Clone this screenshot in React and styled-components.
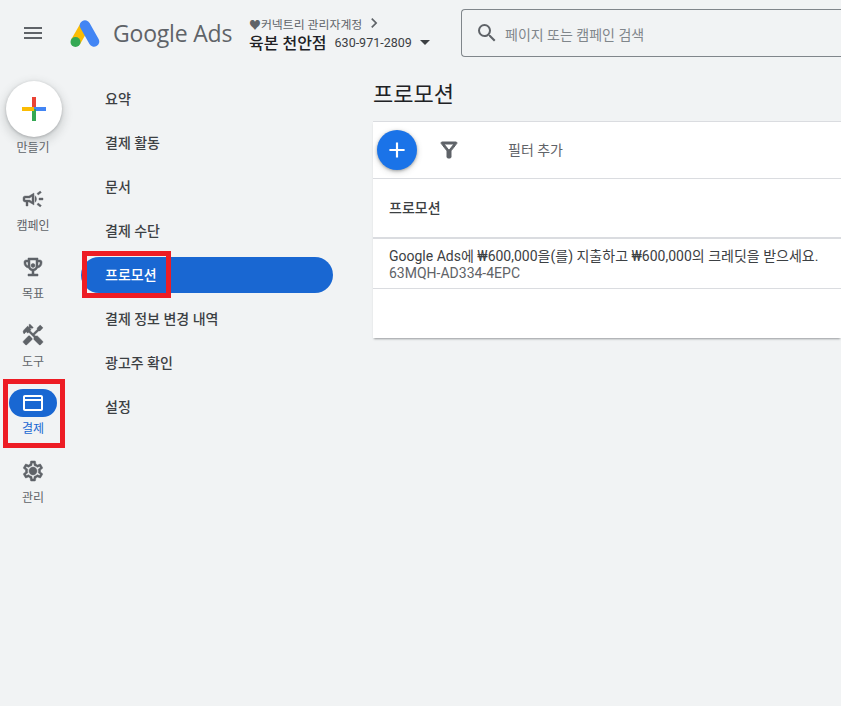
import React from "react";
import styled, { createGlobalStyle } from "styled-components";

const FONT = `Roboto, "Noto Sans CJK KR", sans-serif`;

const GlobalStyle = createGlobalStyle`
  html, body {
    margin: 0;
    height: 100%;
    overflow: hidden;
    background: #f1f3f4;
    font-family: ${FONT};
  }
`;

const Page = styled.div`
  position: relative;
  width: 841px;
  height: 706px;
  overflow: hidden;
  background: #f1f3f4;
`;

const TopBar = styled.header`
  display: flex;
  align-items: center;
  height: 66px;
  padding-left: 21px;
`;

const MenuButton = styled.div`
  display: flex;
  width: 24px;
  margin-right: 25px;
  color: #5f6368;
`;

const Brand = styled.div`
  display: flex;
  align-items: center;
  width: 179px;
  flex: none;
  color: #5f6368;
  font-family: "Open Sans", ${FONT};
  font-size: 23px;
  letter-spacing: -0.2px;
  gap: 13px;
`;

const AccountBlock = styled.div`
  display: flex;
  flex-direction: column;
  width: 212px;
  flex: none;
`;

const Manager = styled.div`
  display: flex;
  align-items: center;
  height: 18px;
  gap: 2px;
  font-size: 11.9px;
  color: #5f6368;
`;

const AccountRow = styled.div`
  display: flex;
  align-items: center;
  height: 20px;
`;

const AccountName = styled.span`
  font-size: 16px;
  font-weight: 500;
  color: #202124;
  margin-right: 8px;
`;

const AccountId = styled.span`
  font-size: 12.5px;
  color: #3c4043;
  margin-right: 8px;
`;

const Caret = styled.span`
  width: 0;
  height: 0;
  border-left: 5px solid transparent;
  border-right: 5px solid transparent;
  border-top: 5px solid #3c4043;
`;

const SearchBox = styled.div`
  display: flex;
  align-items: center;
  flex: none;
  width: 400px;
  height: 48px;
  box-sizing: border-box;
  border: 1px solid #80868b;
  border-right: none;
  border-radius: 4px 0 0 4px;
  padding-left: 13px;
  gap: 6px;
  color: #5f6368;
  font-size: 14px;
`;

const SearchText = styled.span`
  color: #80868b;
  padding-top: 2px;
`;

const Body = styled.div`
  display: flex;
  align-items: flex-start;
`;

const Rail = styled.nav`
  display: flex;
  flex-direction: column;
  align-items: center;
  flex: none;
  width: 66px;
  padding-top: 15px;
`;

const CreateCircle = styled.div`
  display: flex;
  align-items: center;
  justify-content: center;
  width: 56px;
  height: 56px;
  margin-left: 2px;
  border-radius: 50%;
  background: #fff;
  box-shadow: 0 1px 3px rgba(60, 64, 67, 0.3), 0 4px 8px 3px rgba(60, 64, 67, 0.15);
`;

const CreateLabel = styled.div`
  font-size: 12px;
  line-height: 16px;
  margin-top: 3px;
  margin-bottom: 29px;
  color: #5f6368;
`;

const RailItem = styled.div`
  display: flex;
  flex-direction: column;
  align-items: center;
  height: 68px;
  color: ${(p) => (p.$active ? "#1967d2" : "#5f6368")};
  font-size: 12px;
  line-height: 16px;
`;

const RailIcon = styled.div`
  display: flex;
  align-items: center;
  justify-content: center;
  width: 48px;
  height: 28px;
  margin-bottom: ${(p) => (p.$active ? "4px" : "5px")};
  border-radius: 14px;
  background: ${(p) => (p.$active ? "#1967d2" : "transparent")};
  color: ${(p) => (p.$active ? "#fff" : "#5f6368")};
`;

const SubNav = styled.nav`
  display: flex;
  flex-direction: column;
  flex: none;
  width: 252px;
  margin-left: 15px;
  margin-right: 40px;
  margin-top: 15px;
`;

const SubItem = styled.div`
  display: flex;
  align-items: center;
  height: 36px;
  box-sizing: border-box;
  margin-bottom: 8px;
  padding: 0 0 2px 24px;
  border-radius: 18px;
  font-size: 14px;
  font-weight: 500;
  color: ${(p) => (p.$active ? "#fff" : "#3c4043")};
  background: ${(p) => (p.$active ? "#1967d2" : "transparent")};
`;

const Content = styled.main`
  flex: 1;
  min-width: 0;
`;

const Title = styled.h1`
  margin: 0;
  height: 55px;
  padding-top: 1px;
  box-sizing: border-box;
  font-size: 22px;
  font-weight: 400;
  line-height: 55px;
  color: #202124;
`;

const Card = styled.section`
  background: #fff;
  height: 216px;
  border-top: 1px solid #dadce0;
  box-shadow: 0 2px 2px -1px rgba(60, 64, 67, 0.5);
`;

const Toolbar = styled.div`
  display: flex;
  align-items: center;
  height: 56px;
  padding-left: 4px;
  border-bottom: 1px solid #dadce0;
`;

const AddButton = styled.div`
  display: flex;
  align-items: center;
  justify-content: center;
  width: 40px;
  height: 40px;
  border-radius: 50%;
  background: #1a73e8;
  color: #fff;
  box-shadow: 0 1px 3px rgba(60, 64, 67, 0.4), 0 2px 6px rgba(60, 64, 67, 0.2);
`;

const FilterIcon = styled.div`
  display: flex;
  margin-left: 20px;
  margin-right: 47px;
  color: #5f6368;
`;

const FilterText = styled.span`
  font-size: 14px;
  color: #5f6368;
  margin-bottom: 2px;
`;

const HeadRow = styled.div`
  display: flex;
  align-items: center;
  height: 60px;
  padding: 0 0 2px 16px;
  box-sizing: border-box;
  border-bottom: 2px solid #dadce0;
  font-size: 14px;
  font-weight: 500;
  color: #3c4043;
`;

const PromoRow = styled.div`
  height: 50px;
  padding: 9px 0 0 16px;
  box-sizing: border-box;
  border-bottom: 1px solid #dadce0;
  font-size: 14px;
  line-height: 17px;
  color: #3c4043;
  white-space: nowrap;
`;

const PromoCode = styled.div`
  color: #5f6368;
`;

const Highlight = styled.div`
  position: absolute;
  box-sizing: border-box;
  left: ${(p) => p.$x}px;
  top: ${(p) => p.$y}px;
  width: ${(p) => p.$w}px;
  height: ${(p) => p.$h}px;
  border: 5px solid #ed1c24;
  pointer-events: none;
`;

const Icon = ({ d, size = 24, bold = 0, flip }) => (
  <svg width={size} height={size} viewBox="0 0 24 24" fill="currentColor" stroke="currentColor" strokeWidth={bold}>
    <path d={d} transform={flip ? "matrix(-1 0 0 1 24 0)" : undefined} />
  </svg>
);

const ICONS = {
  menu: "M3 18h18v-2H3v2zm0-5h18v-2H3v2zm0-7v2h18V6H3z",
  search:
    "M15.5 14h-.79l-.28-.27A6.47 6.47 0 0 0 16 9.5 6.5 6.5 0 1 0 9.5 16c1.61 0 3.09-.59 4.23-1.57l.27.28v.79l5 4.99L20.49 19l-4.99-5zm-6 0C7.01 14 5 11.99 5 9.5S7.01 5 9.5 5 14 7.01 14 9.5 11.99 14 9.5 14z",
  chevron: "M8.6 16.6 13.2 12 8.6 7.4 10 6l6 6-6 6z",
  campaign:
    "M18 11v2h4v-2h-4zm-2 6.61c.96.71 2.21 1.65 3.2 2.4.4-.53.8-1.07 1.2-1.6-.99-.75-2.24-1.69-3.2-2.41-.4.54-.8 1.08-1.2 1.61zM20.4 5.6c-.4-.53-.8-1.07-1.2-1.6-.99.75-2.24 1.69-3.2 2.4.4.53.8 1.07 1.2 1.6.96-.72 2.21-1.65 3.2-2.4zM4 9c-1.1 0-2 .9-2 2v2c0 1.1.9 2 2 2h1v4h2v-4h1l5 3V6L8 9H4zm5.03 1.71L11 9.53v4.94l-1.97-1.18-.48-.29H4v-2h4.55l.48-.29zM15.5 12c0-1.33-.58-2.53-1.5-3.35v6.69c.92-.81 1.5-2.01 1.5-3.34z",
  trophy:
    "M19 5h-2V3H7v2H5c-1.1 0-2 .9-2 2v1c0 2.55 1.92 4.63 4.39 4.94A5.01 5.01 0 0 0 11 15.9V19H7v2h10v-2h-4v-3.1a5.01 5.01 0 0 0 3.61-2.96C19.08 12.63 21 10.55 21 8V7c0-1.1-.9-2-2-2zM5 8V7h2v3.82C5.84 10.4 5 9.3 5 8zm7 6c-1.65 0-3-1.35-3-3V5h6v6c0 1.65-1.35 3-3 3zm7-6c0 1.3-.84 2.4-2 2.82V7h2v1z M12 8.5a2 2 0 1 0 0 4 2 2 0 0 0 0-4z",
  tools:
    "m21.67 18.17-5.3-5.3h-.99l-2.54 2.54v.99l5.3 5.3c.39.39 1.02.39 1.41 0l2.12-2.12c.39-.38.39-1.02 0-1.41zM17.34 10.19l1.41-1.41 2.12 2.12a3 3 0 0 0 0-4.24l-3.54-3.54-1.41 1.41V1.71l-.7-.71-3.54 3.54.71.71h2.83l-1.41 1.41 1.06 1.06-2.89 2.89-4.13-4.13V5.06L4.83 2.04 2 4.87 5.03 7.9h1.41l4.13 4.13-.85.85H7.61l-5.3 5.3c-.39.39-.39 1.02 0 1.41l2.12 2.12c.39.39 1.02.39 1.41 0l5.3-5.3v-2.12l5.15-5.15 1.05 1.05z",
  card: "M20 4H4c-1.11 0-2 .89-2 2v12c0 1.11.89 2 2 2h16c1.11 0 2-.89 2-2V6c0-1.11-.89-2-2-2zm0 14H4v-8h16v8zm0-10H4V6h16v2z",
  gear:
    "M19.43 12.98c.04-.32.07-.64.07-.98s-.03-.66-.07-.98l2.11-1.65c.19-.15.24-.42.12-.64l-2-3.46c-.12-.22-.39-.3-.61-.22l-2.49 1c-.52-.4-1.08-.73-1.69-.98l-.38-2.65A.488.488 0 0 0 14 2h-4c-.25 0-.46.18-.49.42l-.38 2.65c-.61.25-1.17.59-1.69.98l-2.49-1c-.23-.09-.49 0-.61.22l-2 3.46c-.13.22-.07.49.12.64l2.11 1.65c-.04.32-.07.65-.07.98s.03.66.07.98l-2.11 1.65c-.19.15-.24.42-.12.64l2 3.46c.12.22.39.3.61.22l2.49-1c.52.4 1.08.73 1.69.98l.38 2.65c.03.24.24.42.49.42h4c.25 0 .46-.18.49-.42l.38-2.65c.61-.25 1.17-.59 1.69-.98l2.49 1c.23.09.49 0 .61-.22l2-3.46c.12-.22.07-.49-.12-.64l-2.11-1.65zM17.45 11.27c.04.31.05.52.05.73 0 .21-.02.43-.05.73l-.14 1.13.89.7 1.08.84-.7 1.21-1.27-.51-1.04-.42-.9.68c-.43.32-.84.56-1.25.73l-1.06.43-.16 1.13-.2 1.35h-1.4l-.19-1.35-.16-1.13-1.06-.43c-.43-.18-.83-.41-1.23-.71l-.91-.7-1.06.43-1.27.51-.7-1.21 1.08-.84.89-.7-.14-1.13c-.03-.31-.05-.54-.05-.74s.02-.43.05-.73l.14-1.13-.89-.7-1.08-.84.7-1.21 1.27.51 1.04.42.9-.68c.43-.32.84-.56 1.25-.73l1.06-.43.16-1.13.2-1.35h1.39l.19 1.35.16 1.13 1.06.43c.43.18.83.41 1.23.71l.91.7 1.06-.43 1.27-.51.7 1.21-1.07.85-.89.7.14 1.13zM12 8c-2.21 0-4 1.79-4 4s1.79 4 4 4 4-1.79 4-4-1.79-4-4-4z",
  plus: "M19 13h-6v6h-2v-6H5v-2h6V5h2v6h6v2z",
  filter:
    "M7 6h10l-5.01 6.3L7 6zm-2.75-.39C6.27 8.2 10 13 10 13v6c0 .55.45 1 1 1h2c.55 0 1-.45 1-1v-6s3.72-4.8 5.74-7.39A1 1 0 0 0 18.95 4H5.04a1 1 0 0 0-.79 1.61z",
};

const AdsLogo = () => (
  <svg width="30" height="27" viewBox="0 0 30 27">
    <path d="M5.5 22 L15 5.5" stroke="#fbbc04" strokeWidth="10" fill="none" />
    <path d="M15 5.5 L24 21.5" stroke="#4285f4" strokeWidth="10.5" strokeLinecap="round" fill="none" />
    <circle cx="5.5" cy="22" r="5" fill="#34a853" />
  </svg>
);

const CreatePlus = () => (
  <svg width="24" height="24" viewBox="0 0 24 24">
    <rect x="10" y="0" width="4" height="12" fill="#ea4335" />
    <rect x="12" y="10" width="12" height="4" fill="#4285f4" />
    <rect x="10" y="12" width="4" height="12" fill="#34a853" />
    <rect x="0" y="10" width="12" height="4" fill="#fbbc04" />
  </svg>
);

const railItems = [
  { label: "캠페인", icon: ICONS.campaign, bold: 0.4 },
  { label: "목표", icon: ICONS.trophy, bold: 0.5 },
  { label: "도구", icon: ICONS.tools, bold: 0.4, flip: true },
  { label: "결제", icon: ICONS.card, active: true },
  { label: "관리", icon: ICONS.gear, bold: 0.5 },
];

const subItems = ["요약", "결제 활동", "문서", "결제 수단", "프로모션", "결제 정보 변경 내역", "광고주 확인", "설정"];

export default function App() {
  return (
    <Page>
      <GlobalStyle />
      <TopBar>
        <MenuButton>
          <Icon d={ICONS.menu} />
        </MenuButton>
        <Brand>
          <AdsLogo />
          <span>Google Ads</span>
        </Brand>
        <AccountBlock>
          <Manager>
            ♥커넥트리 관리자계정
            <Icon d={ICONS.chevron} size={20} />
          </Manager>
          <AccountRow>
            <AccountName>육본 천안점</AccountName>
            <AccountId>630-971-2809</AccountId>
            <Caret />
          </AccountRow>
        </AccountBlock>
        <SearchBox>
          <Icon d={ICONS.search} />
          <SearchText>페이지 또는 캠페인 검색</SearchText>
        </SearchBox>
      </TopBar>
      <Body>
        <Rail>
          <CreateCircle>
            <CreatePlus />
          </CreateCircle>
          <CreateLabel>만들기</CreateLabel>
          {railItems.map((item) => (
            <RailItem key={item.label} $active={item.active}>
              <RailIcon $active={item.active}>
                <Icon d={item.icon} bold={item.bold} flip={item.flip} />
              </RailIcon>
              {item.label}
            </RailItem>
          ))}
        </Rail>
        <SubNav>
          {subItems.map((label) => (
            <SubItem key={label} $active={label === "프로모션"}>
              {label}
            </SubItem>
          ))}
        </SubNav>
        <Content>
          <Title>프로모션</Title>
          <Card>
            <Toolbar>
              <AddButton>
                <Icon d={ICONS.plus} size={26} />
              </AddButton>
              <FilterIcon>
                <Icon d={ICONS.filter} bold={1} />
              </FilterIcon>
              <FilterText>필터 추가</FilterText>
            </Toolbar>
            <HeadRow>프로모션</HeadRow>
            <PromoRow>
              Google Ads에 ₩600,000을(를) 지출하고 ₩600,000의 크레딧을 받으세요.
              <PromoCode>63MQH-AD334-4EPC</PromoCode>
            </PromoRow>
          </Card>
        </Content>
      </Body>
      <Highlight $x={3} $y={379} $w={62} $h={69} />
      <Highlight $x={82} $y={251} $w={89} $h={47} />
    </Page>
  );
}
